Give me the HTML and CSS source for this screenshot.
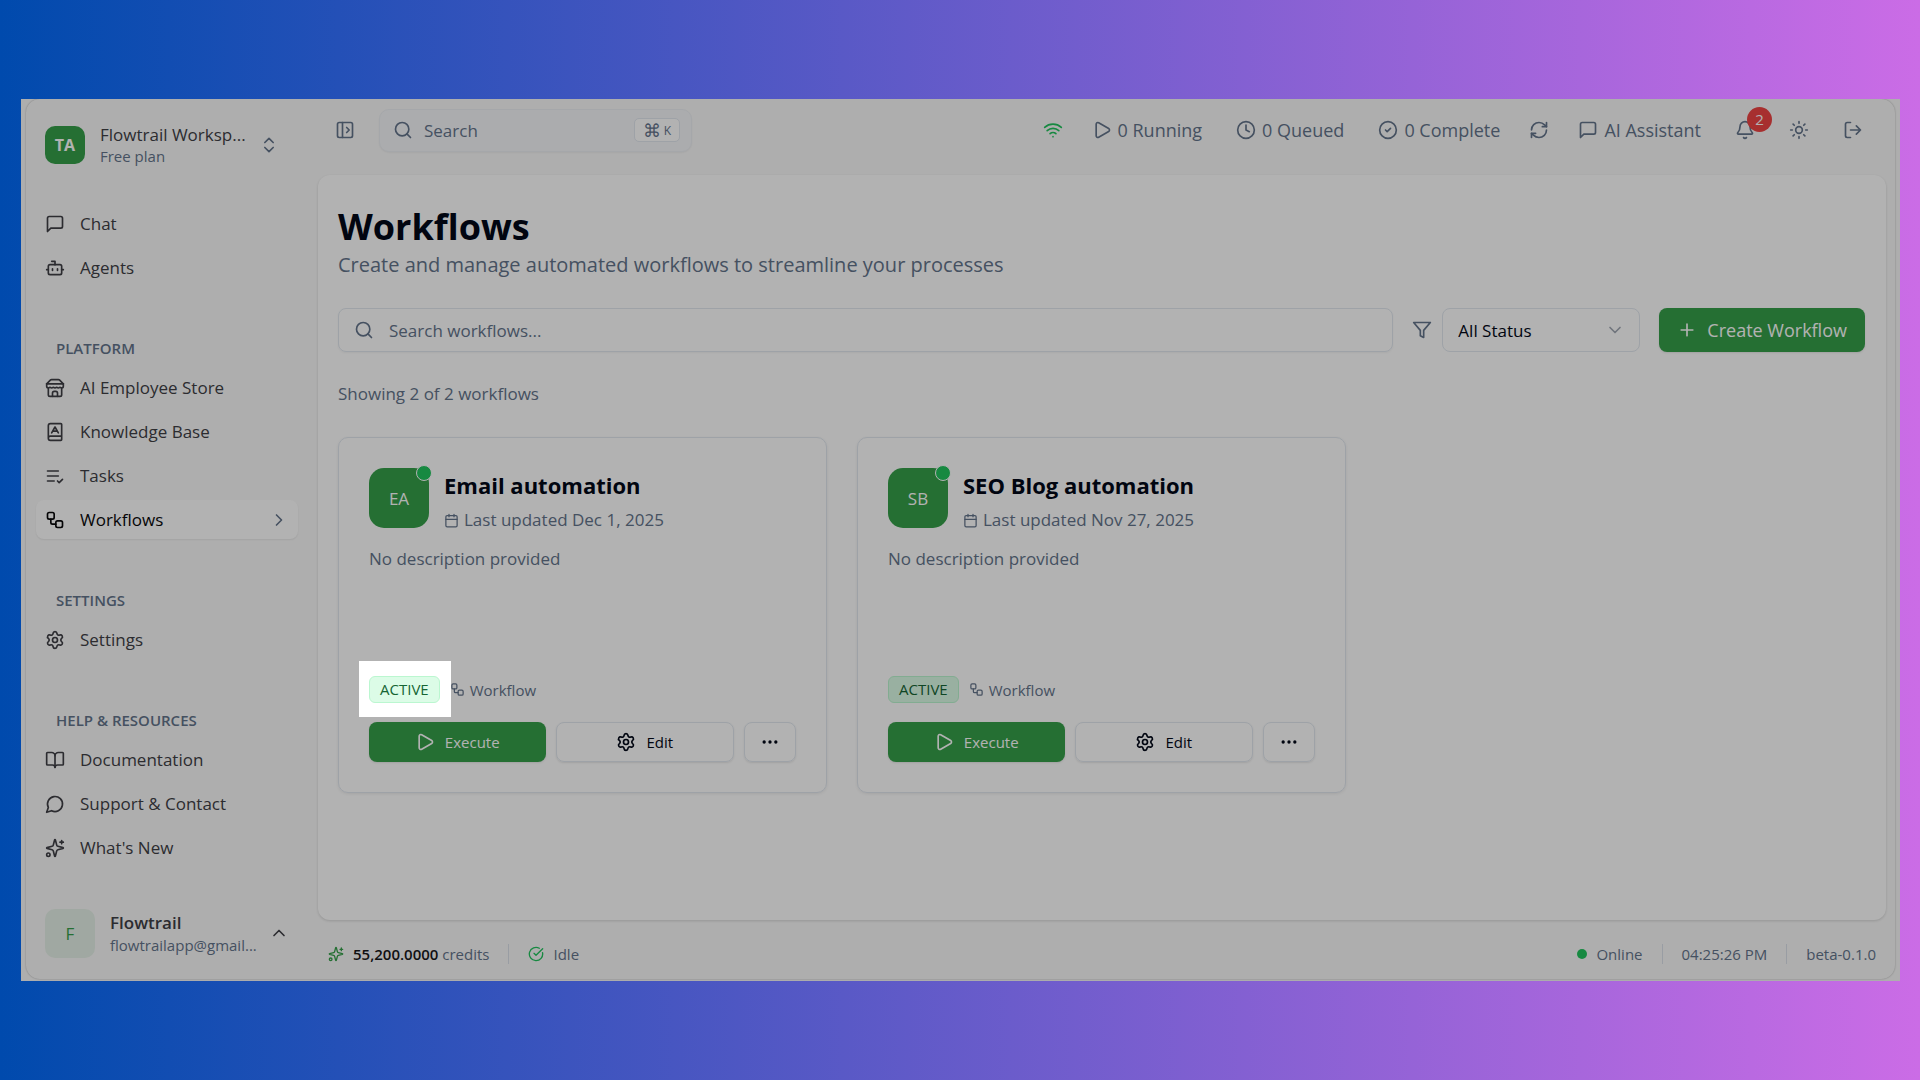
FILE: index.html
```html
<!DOCTYPE html>
<html lang="en">
<head>
  <meta charset="UTF-8" />
  <meta name="viewport" content="width=device-width, initial-scale=1.0"/>
  <title>Flowtrail - Workflows</title>
  <link rel="stylesheet" href="styles.css">
</head>
<body>

  <!-- Icon set -->
  <svg class="icon-defs" aria-hidden="true">
    <symbol id="i-message" viewBox="0 0 24 24"><path d="M21 15a2 2 0 0 1-2 2H7l-4 4V5a2 2 0 0 1 2-2h14a2 2 0 0 1 2 2z"/></symbol>
    <symbol id="i-bot" viewBox="0 0 24 24"><path d="M12 8V4H8"/><rect width="16" height="12" x="4" y="8" rx="2"/><path d="M2 14h2M20 14h2M15 13v2M9 13v2"/></symbol>
    <symbol id="i-store" viewBox="0 0 24 24"><path d="m2 7 4.41-4.41A2 2 0 0 1 7.83 2h8.34a2 2 0 0 1 1.42.59L22 7"/><path d="M4 12v8a2 2 0 0 0 2 2h12a2 2 0 0 0 2-2v-8"/><path d="M15 22v-4a2 2 0 0 0-2-2h-2a2 2 0 0 0-2 2v4"/><path d="M2 7h20"/><path d="M22 7v3a2 2 0 0 1-2 2a2.7 2.7 0 0 1-1.59-.63.7.7 0 0 0-.82 0A2.7 2.7 0 0 1 16 12a2.7 2.7 0 0 1-1.59-.63.7.7 0 0 0-.82 0A2.7 2.7 0 0 1 12 12a2.7 2.7 0 0 1-1.59-.63.7.7 0 0 0-.82 0A2.7 2.7 0 0 1 8 12a2.7 2.7 0 0 1-1.59-.63.7.7 0 0 0-.82 0A2.7 2.7 0 0 1 4 12a2 2 0 0 1-2-2V7"/></symbol>
    <symbol id="i-book-a" viewBox="0 0 24 24"><path d="M4 19.5v-15A2.5 2.5 0 0 1 6.5 2H19a1 1 0 0 1 1 1v18a1 1 0 0 1-1 1H6.5a1 1 0 0 1 0-5H20"/><path d="m8 13 4-7 4 7M9.1 11h5.7"/></symbol>
    <symbol id="i-tasks" viewBox="0 0 24 24"><path d="M11 18H3M15 18l2 2 4-4M16 12H3M16 6H3"/></symbol>
    <symbol id="i-workflow" viewBox="0 0 24 24"><rect width="8" height="8" x="3" y="3" rx="2"/><path d="M7 11v4a2 2 0 0 0 2 2h4"/><rect width="8" height="8" x="13" y="13" rx="2"/></symbol>
    <symbol id="i-settings" viewBox="0 0 24 24"><path d="M9.67 4.14a2.34 2.34 0 0 1 4.66 0 2.34 2.34 0 0 0 3.32 1.91 2.34 2.34 0 0 1 2.33 4.03 2.34 2.34 0 0 0 0 3.84 2.34 2.34 0 0 1-2.33 4.03 2.34 2.34 0 0 0-3.32 1.91 2.34 2.34 0 0 1-4.66 0 2.34 2.34 0 0 0-3.32-1.91 2.34 2.34 0 0 1-2.33-4.03 2.34 2.34 0 0 0 0-3.84 2.34 2.34 0 0 1 2.33-4.03 2.34 2.34 0 0 0 3.32-1.91"/><circle cx="12" cy="12" r="3"/></symbol>
    <symbol id="i-book-open" viewBox="0 0 24 24"><path d="M12 7v14"/><path d="M3 18a1 1 0 0 1-1-1V4a1 1 0 0 1 1-1h5a4 4 0 0 1 4 4 4 4 0 0 1 4-4h5a1 1 0 0 1 1 1v13a1 1 0 0 1-1 1h-6a3 3 0 0 0-3 3 3 3 0 0 0-3-3z"/></symbol>
    <symbol id="i-chat-round" viewBox="0 0 24 24"><path d="M7.9 20A9 9 0 1 0 4 16.1L2 22Z"/></symbol>
    <symbol id="i-sparkles" viewBox="0 0 24 24"><path d="M9.94 15.5A2 2 0 0 0 8.5 14.06l-6.14-1.58a.5.5 0 0 1 0-.96L8.5 9.94A2 2 0 0 0 9.94 8.5l1.58-6.14a.5.5 0 0 1 .96 0l1.58 6.14a2 2 0 0 0 1.44 1.44l6.14 1.58a.5.5 0 0 1 0 .96l-6.14 1.58a2 2 0 0 0-1.44 1.44l-1.58 6.14a.5.5 0 0 1-.96 0z"/><path d="M20 3v4M22 5h-4"/><circle cx="4" cy="20" r="2"/></symbol>
    <symbol id="i-updown" viewBox="0 0 24 24"><path d="m7 15 5 5 5-5M7 9l5-5 5 5"/></symbol>
    <symbol id="i-up" viewBox="0 0 24 24"><path d="m18 15-6-6-6 6"/></symbol>
    <symbol id="i-down" viewBox="0 0 24 24"><path d="m6 9 6 6 6-6"/></symbol>
    <symbol id="i-right" viewBox="0 0 24 24"><path d="m9 18 6-6-6-6"/></symbol>
    <symbol id="i-panel" viewBox="0 0 24 24"><rect width="18" height="18" x="3" y="3" rx="2"/><path d="M9 3v18M14 9l3 3-3 3"/></symbol>
    <symbol id="i-search" viewBox="0 0 24 24"><circle cx="11" cy="11" r="8"/><path d="m21 21-4.3-4.3"/></symbol>
    <symbol id="i-wifi" viewBox="0 0 24 24"><path d="M12 20h.01M2 8.82a15 15 0 0 1 20 0M5 12.86a10 10 0 0 1 14 0M8.5 16.43a5 5 0 0 1 7 0"/></symbol>
    <symbol id="i-play" viewBox="0 0 24 24"><path d="M5 5a2 2 0 0 1 3.01-1.73l12 7a2 2 0 0 1 0 3.46l-12 7A2 2 0 0 1 5 19z"/></symbol>
    <symbol id="i-clock" viewBox="0 0 24 24"><circle cx="12" cy="12" r="10"/><path d="M12 6v6l4 2"/></symbol>
    <symbol id="i-check" viewBox="0 0 24 24"><circle cx="12" cy="12" r="10"/><path d="m9 12 2 2 4-4"/></symbol>
    <symbol id="i-check-big" viewBox="0 0 24 24"><path d="M21.8 10A10 10 0 1 1 17 3.34"/><path d="m9 11 3 3L22 4"/></symbol>
    <symbol id="i-refresh" viewBox="0 0 24 24"><path d="M3 12a9 9 0 0 1 9-9 9.75 9.75 0 0 1 6.74 2.74L21 8"/><path d="M21 3v5h-5"/><path d="M21 12a9 9 0 0 1-9 9 9.75 9.75 0 0 1-6.74-2.74L3 16"/><path d="M8 16H3v5"/></symbol>
    <symbol id="i-bell" viewBox="0 0 24 24"><path d="M10.27 21a2 2 0 0 0 3.46 0"/><path d="M3.26 15.33A1 1 0 0 0 4 17h16a1 1 0 0 0 .74-1.67C19.41 13.96 18 12.5 18 8A6 6 0 0 0 6 8c0 4.5-1.41 5.96-2.74 7.33"/></symbol>
    <symbol id="i-sun" viewBox="0 0 24 24"><circle cx="12" cy="12" r="4"/><path d="M12 2v2M12 20v2M4.93 4.93l1.41 1.41M17.66 17.66l1.41 1.41M2 12h2M20 12h2M6.34 17.66l-1.41 1.41M19.07 4.93l-1.41 1.41"/></symbol>
    <symbol id="i-logout" viewBox="0 0 24 24"><path d="M9 21H5a2 2 0 0 1-2-2V5a2 2 0 0 1 2-2h4"/><path d="m16 17 5-5-5-5M21 12H9"/></symbol>
    <symbol id="i-filter" viewBox="0 0 24 24"><path d="M22 3H2l8 9.46V19l4 2v-8.54z"/></symbol>
    <symbol id="i-plus" viewBox="0 0 24 24"><path d="M5 12h14M12 5v14"/></symbol>
    <symbol id="i-calendar" viewBox="0 0 24 24"><path d="M8 2v4M16 2v4M3 10h18"/><rect width="18" height="18" x="3" y="4" rx="2"/></symbol>
    <symbol id="i-dots" viewBox="0 0 24 24"><circle cx="12" cy="12" r="1"/><circle cx="19" cy="12" r="1"/><circle cx="5" cy="12" r="1"/></symbol>
  </svg>

  <div class="window">
    <div class="app">

      <!-- Sidebar -->
      <aside class="sidebar">
        <button class="workspace">
          <span class="workspace-logo">TA</span>
          <span class="workspace-text">
            <span class="workspace-name">Flowtrail Worksp...</span>
            <span class="workspace-plan">Free plan</span>
          </span>
          <svg class="icon"><use href="#i-updown"/></svg>
        </button>

        <nav class="nav">
          <ul>
            <li><a href="#chat"><svg class="icon"><use href="#i-message"/></svg>Chat</a></li>
            <li><a href="#agents"><svg class="icon"><use href="#i-bot"/></svg>Agents</a></li>
          </ul>
          <h2>PLATFORM</h2>
          <ul>
            <li><a href="#store"><svg class="icon"><use href="#i-store"/></svg>AI Employee Store</a></li>
            <li><a href="#knowledge"><svg class="icon"><use href="#i-book-a"/></svg>Knowledge Base</a></li>
            <li><a href="#tasks"><svg class="icon"><use href="#i-tasks"/></svg>Tasks</a></li>
            <li><a href="#workflows" class="active"><svg class="icon"><use href="#i-workflow"/></svg>Workflows<svg class="icon arrow"><use href="#i-right"/></svg></a></li>
          </ul>
          <h2>SETTINGS</h2>
          <ul>
            <li><a href="#settings"><svg class="icon"><use href="#i-settings"/></svg>Settings</a></li>
          </ul>
          <h2>HELP &amp; RESOURCES</h2>
          <ul>
            <li><a href="#docs"><svg class="icon"><use href="#i-book-open"/></svg>Documentation</a></li>
            <li><a href="#support"><svg class="icon"><use href="#i-chat-round"/></svg>Support &amp; Contact</a></li>
            <li><a href="#new"><svg class="icon"><use href="#i-sparkles"/></svg>What's New</a></li>
          </ul>
        </nav>

        <button class="user">
          <span class="user-avatar">F</span>
          <span class="user-text">
            <span class="user-name">Flowtrail</span>
            <span class="user-email">flowtrailapp@gmail...</span>
          </span>
          <svg class="icon"><use href="#i-up"/></svg>
        </button>
      </aside>

      <div class="main">
        <!-- Top bar -->
        <header class="topbar">
          <button class="icon-btn" aria-label="Toggle sidebar"><svg class="icon"><use href="#i-panel"/></svg></button>
          <button class="quick-search">
            <svg class="icon"><use href="#i-search"/></svg>
            <span>Search</span>
            <kbd><span>⌘</span>K</kbd>
          </button>
          <div class="topbar-right">
            <svg class="icon wifi"><use href="#i-wifi"/></svg>
            <div class="stats">
              <span class="stat"><svg class="icon"><use href="#i-play"/></svg>0 Running</span>
              <span class="stat"><svg class="icon"><use href="#i-clock"/></svg>0 Queued</span>
              <span class="stat"><svg class="icon"><use href="#i-check"/></svg>0 Complete</span>
            </div>
            <button class="icon-btn" aria-label="Refresh"><svg class="icon"><use href="#i-refresh"/></svg></button>
            <div class="stats">
              <button class="stat"><svg class="icon"><use href="#i-message"/></svg>AI Assistant</button>
              <button class="icon-btn bell" aria-label="Notifications"><svg class="icon"><use href="#i-bell"/></svg><span class="count">2</span></button>
              <button class="icon-btn" aria-label="Theme"><svg class="icon"><use href="#i-sun"/></svg></button>
              <button class="icon-btn" aria-label="Log out"><svg class="icon"><use href="#i-logout"/></svg></button>
            </div>
          </div>
        </header>

        <!-- Page content -->
        <main class="content">
          <h1>Workflows</h1>
          <p class="subtitle">Create and manage automated workflows to streamline your processes</p>

          <div class="toolbar">
            <label class="search-box">
              <svg class="icon"><use href="#i-search"/></svg>
              <input type="text" placeholder="Search workflows..." aria-label="Search workflows">
            </label>
            <label class="filter">
              <svg class="icon"><use href="#i-filter"/></svg>
              <span class="select-box">
                <select aria-label="Status">
                  <option>All Status</option>
                </select>
                <svg class="icon"><use href="#i-down"/></svg>
              </span>
            </label>
            <button class="btn btn-primary btn-create"><svg class="icon"><use href="#i-plus"/></svg>Create Workflow</button>
          </div>

          <p class="result-count">Showing 2 of 2 workflows</p>

          <div class="cards">
            <article class="card">
              <div class="card-head">
                <div class="card-avatar">EA<span class="dot"></span></div>
                <div>
                  <h3>Email automation</h3>
                  <p class="updated"><svg class="icon"><use href="#i-calendar"/></svg>Last updated Dec 1, 2025</p>
                </div>
              </div>
              <p class="description">No description provided</p>
              <div class="tags">
                <div class="badge-wrap">
                  <span class="badge">ACTIVE</span>
                  <span class="spotlight"></span>
                </div>
                <span class="type"><svg class="icon"><use href="#i-workflow"/></svg>Workflow</span>
              </div>
              <div class="actions">
                <button class="btn btn-primary"><svg class="icon"><use href="#i-play"/></svg>Execute</button>
                <button class="btn btn-outline"><svg class="icon"><use href="#i-settings"/></svg>Edit</button>
                <button class="btn btn-outline btn-more" aria-label="More"><svg class="icon"><use href="#i-dots"/></svg></button>
              </div>
            </article>

            <article class="card">
              <div class="card-head">
                <div class="card-avatar">SB<span class="dot"></span></div>
                <div>
                  <h3>SEO Blog automation</h3>
                  <p class="updated"><svg class="icon"><use href="#i-calendar"/></svg>Last updated Nov 27, 2025</p>
                </div>
              </div>
              <p class="description">No description provided</p>
              <div class="tags">
                <span class="badge">ACTIVE</span>
                <span class="type"><svg class="icon"><use href="#i-workflow"/></svg>Workflow</span>
              </div>
              <div class="actions">
                <button class="btn btn-primary"><svg class="icon"><use href="#i-play"/></svg>Execute</button>
                <button class="btn btn-outline"><svg class="icon"><use href="#i-settings"/></svg>Edit</button>
                <button class="btn btn-outline btn-more" aria-label="More"><svg class="icon"><use href="#i-dots"/></svg></button>
              </div>
            </article>
          </div>
        </main>

        <!-- Status bar -->
        <footer class="statusbar">
          <span class="status credits"><svg class="icon"><use href="#i-sparkles"/></svg><span><strong>55,200.0000</strong> credits</span></span>
          <span class="divider"></span>
          <span class="status idle"><svg class="icon"><use href="#i-check-big"/></svg>Idle</span>
          <span class="status online"><span class="online-dot"></span>Online</span>
          <span class="divider"></span>
          <span class="status">04:25:26 PM</span>
          <span class="divider"></span>
          <span class="status">beta-0.1.0</span>
        </footer>
      </div>
    </div>
  </div>

</body>
</html>
```
FILE: styles.css
```css
* { margin: 0; padding: 0; box-sizing: border-box; }

body {
  font-family: "Open Sans", "Noto Sans", sans-serif;
  font-size: 17px;
  color: #3f3f46;
  min-height: 100vh;
  display: flex;
  padding: 99px 20px 99px 21px;
  background: linear-gradient(90deg, #004aad, #cb6ce6);
}

button {
  font: inherit;
  color: inherit;
  background: none;
  border: none;
  cursor: pointer;
}

ul { list-style: none; }
a { color: inherit; text-decoration: none; }

.icon-defs { display: none; }

.icon {
  width: 20px;
  height: 20px;
  flex-shrink: 0;
  fill: none;
  stroke: currentColor;
  stroke-width: 2;
  stroke-linecap: round;
  stroke-linejoin: round;
}

.window {
  flex: 1;
  display: flex;
  padding: 0 5px 2px;
  background: #fafafa;
  overflow: hidden;
}

.app {
  flex: 1;
  display: flex;
  background: #fafafa;
  border-radius: 14px;
  box-shadow: 0 0 2px rgba(0, 0, 0, 0.3);
  min-width: 0;
}

/* Sidebar */
.sidebar {
  display: flex;
  flex-direction: column;
  width: 292px;
  padding: 19px 20px 21px 10px;
}

.workspace,
.user {
  display: flex;
  align-items: center;
  text-align: left;
  padding: 0 9px;
}

.workspace { gap: 15px; height: 54px; }

.workspace-logo {
  display: flex;
  align-items: center;
  justify-content: center;
  width: 40px;
  height: 38px;
  border-radius: 10px;
  background: #36a04a;
  color: #fff;
  font-size: 16px;
  font-weight: 700;
}

.workspace-text,
.user-text {
  display: flex;
  flex-direction: column;
  white-space: nowrap;
}

.workspace-text { width: 150px; }
.workspace-name { line-height: 22px; }
.workspace-plan { font-size: 15px; line-height: 20px; color: #64748b; }
.workspace .icon { color: #64748b; margin-left: -6px; }

.nav { margin-top: 32px; }

.nav ul {
  display: flex;
  flex-direction: column;
  gap: 5px;
}

.nav a {
  display: flex;
  align-items: center;
  gap: 15px;
  height: 39px;
  padding: 0 9px;
  border-radius: 8px;
}

.nav a.active {
  background: #fff;
  color: #09090b;
  font-weight: 500;
  box-shadow: 0 1px 2px rgba(0, 0, 0, 0.08);
}

.nav .arrow { margin-left: auto; color: #64748b; }

.nav h2 {
  margin-top: 41px;
  padding-left: 20px;
  font-size: 15px;
  font-weight: 600;
  line-height: 40px;
  color: #64748b;
}

.user { gap: 15px; margin-top: auto; height: 50px; }

.user-avatar {
  display: flex;
  align-items: center;
  justify-content: center;
  width: 50px;
  height: 49px;
  flex-shrink: 0;
  border-radius: 10px;
  background: #e6f1e8;
  color: #36a04a;
}

.user-text { width: 144px; }
.user-name { font-weight: 600; line-height: 24px; }
.user-email { font-size: 15px; line-height: 20px; color: #64748b; }

/* Top bar */
.main {
  flex: 1;
  display: flex;
  flex-direction: column;
  min-width: 0;
  padding-right: 9px;
}

.topbar {
  display: flex;
  align-items: center;
  height: 76px;
  padding: 0 23px 14px 17px;
  color: #64748b;
}

.icon-btn {
  display: flex;
  align-items: center;
  justify-content: center;
}

.quick-search {
  display: flex;
  align-items: center;
  width: 313px;
  height: 43px;
  margin-left: 24px;
  padding: 0 11px 0 13px;
  gap: 11px;
  border: 1px solid #edf0f4;
  border-radius: 10px;
  background: #f5f7fa;
  box-shadow: 0 1px 2px rgba(0, 0, 0, 0.05);
}

.quick-search kbd {
  display: flex;
  align-items: center;
  gap: 3px;
  height: 24px;
  margin-left: auto;
  padding: 0 8px;
  border: 1px solid #e2e8f0;
  border-radius: 5px;
  background: #fff;
  font-family: inherit;
  font-size: 12px;
}

.quick-search kbd span { font-size: 18px; }

.topbar-right {
  display: flex;
  align-items: center;
  gap: 29px;
  margin-left: auto;
  font-size: 18px;
  line-height: 20px;
}

.wifi { color: #22c55e; }

.stats {
  display: flex;
  align-items: center;
  gap: 34px;
}

.stat {
  display: flex;
  align-items: center;
  gap: 6px;
}

.bell { position: relative; }

.count {
  position: absolute;
  left: 12px;
  top: -13px;
  width: 25px;
  height: 25px;
  border-radius: 50%;
  background: #ef4444;
  color: #fff;
  font-size: 15px;
  line-height: 25px;
  text-align: center;
}

/* Page content */
.content {
  flex: 1;
  padding: 28px 21px 28px 20px;
  border-radius: 12px;
  background: #fff;
  box-shadow: 0 1px 3px rgba(0, 0, 0, 0.15);
}

.content h1 {
  font-size: 36px;
  font-weight: 700;
  line-height: 47px;
  color: #020817;
}

.subtitle {
  font-size: 20px;
  line-height: 30px;
  color: #64748b;
}

.toolbar {
  display: flex;
  align-items: center;
  gap: 19px;
  margin-top: 28px;
}

.search-box {
  flex: 1;
  display: flex;
  align-items: center;
  gap: 15px;
  height: 44px;
  padding: 0 15px;
  border: 1px solid #e2e8f0;
  border-radius: 8px;
  color: #64748b;
  box-shadow: 0 1px 2px rgba(0, 0, 0, 0.05);
}

.search-box input {
  flex: 1;
  min-width: 0;
  border: none;
  outline: none;
  background: none;
  font: inherit;
  color: #020817;
}

.search-box input::placeholder { color: #64748b; }

.filter {
  display: flex;
  align-items: center;
  gap: 10px;
  color: #64748b;
}

.select-box {
  display: grid;
  align-items: center;
  width: 198px;
}

.select-box select,
.select-box .icon { grid-area: 1 / 1; }

.select-box select {
  appearance: none;
  height: 44px;
  padding: 0 15px;
  border: 1px solid #e2e8f0;
  border-radius: 8px;
  background: #fff;
  font: inherit;
  color: #020817;
}

.select-box .icon {
  justify-self: end;
  margin-right: 15px;
  color: #a1a8b3;
  pointer-events: none;
}

.btn {
  display: flex;
  align-items: center;
  justify-content: center;
  gap: 10px;
  height: 40px;
  border-radius: 8px;
  font-size: 15px;
  font-weight: 500;
  white-space: nowrap;
  box-shadow: 0 1px 2px rgba(0, 0, 0, 0.1);
}

.btn-primary {
  background: #36a04a;
  color: #fff;
}

.btn-outline {
  border: 1px solid #e2e8f0;
  color: #020817;
}

.btn-create {
  height: 44px;
  padding: 0 18px;
  font-size: 18px;
}

.result-count {
  margin-top: 30px;
  line-height: 24px;
  color: #64748b;
}

/* Workflow cards */
.cards {
  display: grid;
  grid-template-columns: repeat(3, 1fr);
  gap: 30px;
  margin-top: 31px;
}

.card {
  padding: 30px;
  border: 1px solid #e2e8f0;
  border-radius: 10px;
  box-shadow: 0 1px 3px rgba(0, 0, 0, 0.08);
}

.card-head {
  display: flex;
  align-items: flex-start;
  gap: 15px;
}

.card-avatar {
  position: relative;
  display: flex;
  align-items: center;
  justify-content: center;
  width: 60px;
  height: 60px;
  border-radius: 15px;
  background: #36a04a;
  color: #fff;
}

.dot {
  position: absolute;
  top: -3px;
  right: -3px;
  width: 16px;
  height: 16px;
  border: 1px solid #fff;
  border-radius: 50%;
  background: #22c55e;
}

.card h3 {
  font-size: 22px;
  font-weight: 700;
  line-height: 34px;
  color: #020817;
}

.updated {
  display: flex;
  align-items: center;
  gap: 5px;
  line-height: 36px;
  color: #64748b;
}

.updated .icon,
.type .icon {
  width: 15px;
  height: 15px;
}

.description {
  min-height: 130px;
  margin-top: 8px;
  line-height: 26px;
  color: #64748b;
}

.tags {
  display: flex;
  align-items: center;
  gap: 10px;
}

.badge-wrap {
  position: relative;
  display: flex;
}

.badge {
  display: block;
  padding: 0 10px;
  border: 1px solid #bbf7d0;
  border-radius: 6px;
  background: #dcfce7;
  color: #166534;
  font-size: 15px;
  font-weight: 500;
  line-height: 25px;
}

/* Tour step: dims the whole window except this box */
.spotlight {
  position: absolute;
  inset: -15px -11px -14px -10px;
  z-index: 10;
  box-shadow: 0 0 0 2000px rgba(0, 0, 0, 0.3);
  pointer-events: none;
}

.type {
  display: flex;
  align-items: center;
  gap: 5px;
  font-size: 15px;
  color: #64748b;
}

.actions {
  display: flex;
  gap: 10px;
  margin-top: 19px;
}

.actions .btn { flex: 1; }
.actions .btn-more { flex: 0 0 52px; }

/* Status bar */
.statusbar {
  display: flex;
  align-items: center;
  gap: 19px;
  height: 59px;
  padding: 8px 10px 0 10px;
  font-size: 15px;
  color: #64748b;
}

.status {
  display: flex;
  align-items: center;
  gap: 9px;
}

.status .icon { width: 16px; height: 16px; }
.status strong { font-weight: 600; color: #18181b; }
.credits .icon { color: #36a04a; }
.idle .icon { color: #22c55e; }
.online { margin-left: auto; }

.online-dot {
  width: 10px;
  height: 10px;
  border-radius: 50%;
  background: #22c55e;
}

.divider {
  width: 1px;
  height: 20px;
  background: #dbe1ea;
}
```
